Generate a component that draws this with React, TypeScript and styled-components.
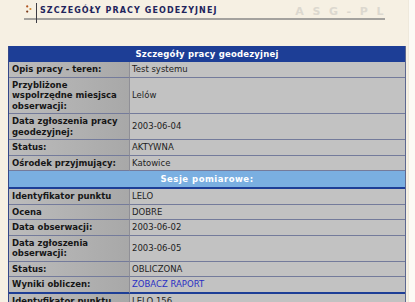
import React from "react";
import styled, { createGlobalStyle } from "styled-components";

const GlobalStyle = createGlobalStyle`
  html, body {
    margin: 0;
    padding: 0;
    overflow: hidden;
    background: #f6f0e3;
  }
  body {
    font-family: "DejaVu Sans", Verdana, sans-serif;
  }
`;

const Page = styled.div`
  display: flex;
  min-height: 302px;
`;

const Main = styled.div`
  flex: 1;
  background: #f6f0e3;
`;

const Edge = styled.div`
  width: 6px;
  background: #fcfaf5;
  border-left: 1px solid #efe9dc;
`;

const TopBar = styled.div`
  display: flex;
  align-items: center;
  height: 18px;
  margin: 0 23px 0 24px;
  padding-left: 2px;
  border-bottom: 2px solid #a4a29e;
`;

const Divider = styled.span`
  align-self: flex-start;
  width: 1px;
  height: 20px;
  margin: 3px 3px -5px 4px;
  background: #3c3c44;
`;

const Title = styled.span`
  font-size: 8px;
  font-weight: bold;
  letter-spacing: 1.1px;
  color: #22245c;
  padding-top: 3px;
`;

const Logo = styled.span`
  margin-left: auto;
  margin-right: -7px;
  padding-top: 4px;
  font-size: 11px;
  font-weight: bold;
  letter-spacing: 8.6px;
  color: #dcd8cf;
`;

const Sheet = styled.table`
  margin: 26px 0 0 8px;
  width: 398px;
  border-spacing: 0;
  border-left: 1px solid #34478a;
  border-right: 1px solid #5d6890;
  font-size: 8.5px;
  line-height: 10.5px;
`;

const Banner = styled.th<{ $tone: "dark" | "light" }>`
  height: 12px;
  line-height: 12px;
  padding: 2px 0;
  text-align: center;
  font-weight: bold;
  color: #ffffff;
  letter-spacing: ${(p) => (p.$tone === "dark" ? 0.2 : 0.5)}px;
  background: ${(p) => (p.$tone === "dark" ? "#1d3e96" : "#7aafe1")};
  border-bottom: ${(p) => (p.$tone === "dark" ? "none" : "2px solid #1d3e96")};
`;

const Label = styled.td<{ $closing?: boolean }>`
  width: 114px;
  padding: 2px 3px;
  font-weight: bold;
  color: #161616;
  vertical-align: middle;
  background: linear-gradient(to right, #bcbcbc, #a8a8a8);
  border-right: 1px solid #8f8f96;
  border-bottom: ${(p) => (p.$closing ? "2px solid #1d3e96" : "1px solid #747b9b")};
`;

const Value = styled.td<{ $closing?: boolean }>`
  padding: 2px 2px;
  color: #1e1e1e;
  vertical-align: middle;
  background: #c2c2c2;
  border-bottom: ${(p) => (p.$closing ? "2px solid #1d3e96" : "1px solid #747b9b")};
`;

const ReportLink = styled.a`
  color: #2a2fc2;
  text-decoration: none;
`;

const Dots = () => (
  <svg width="6" height="8" viewBox="0 0 6 8">
    <circle cx="1.2" cy="1.4" r="1.1" fill="#b0521e" />
    <circle cx="4.4" cy="4" r="1.1" fill="#d98a2a" />
    <circle cx="1.2" cy="6.6" r="1.1" fill="#7a3a1a" />
  </svg>
);

type Row = { label: React.ReactNode; value: React.ReactNode; closing?: boolean };

const work: Row[] = [
  { label: "Opis pracy - teren:", value: "Test systemu" },
  {
    label: (
      <>
        Przybliżone
        <br />
        wspolrzędne miesjsca
        <br />
        obserwacji:
      </>
    ),
    value: "Lelów",
  },
  {
    label: (
      <>
        Data zgłoszenia pracy
        <br />
        geodezyjnej:
      </>
    ),
    value: "2003-06-04",
  },
  { label: "Status:", value: "AKTYWNA" },
  { label: "Ośrodek przyjmujący:", value: "Katowice" },
];

const sessions: Row[] = [
  { label: "Identyfikator punktu", value: "LELO" },
  { label: "Ocena", value: "DOBRE" },
  { label: "Data obserwacji:", value: "2003-06-02" },
  {
    label: (
      <>
        Data zgłoszenia
        <br />
        obserwacji:
      </>
    ),
    value: "2003-06-05",
  },
  { label: "Status:", value: "OBLICZONA" },
  {
    label: "Wyniki obliczen:",
    value: <ReportLink href="#">ZOBACZ RAPORT</ReportLink>,
    closing: true,
  },
  { label: "Identyfikator punktu", value: "LELO 156" },
];

const renderRows = (rows: Row[]) =>
  rows.map((r, i) => (
    <tr key={i}>
      <Label $closing={r.closing}>{r.label}</Label>
      <Value $closing={r.closing}>{r.value}</Value>
    </tr>
  ));

export default function App() {
  return (
    <>
      <GlobalStyle />
      <Page>
        <Main>
          <TopBar>
            <Dots />
            <Divider />
            <Title>SZCZEGÓŁY PRACY GEODEZYJNEJ</Title>
            <Logo>ASG-PL</Logo>
          </TopBar>
          <Sheet>
            <tbody>
              <tr>
                <Banner colSpan={2} $tone="dark">
                  Szczegóły pracy geodezyjnej
                </Banner>
              </tr>
              {renderRows(work)}
              <tr>
                <Banner colSpan={2} $tone="light">
                  Sesje pomiarowe:
                </Banner>
              </tr>
              {renderRows(sessions)}
            </tbody>
          </Sheet>
        </Main>
        <Edge />
      </Page>
    </>
  );
}
